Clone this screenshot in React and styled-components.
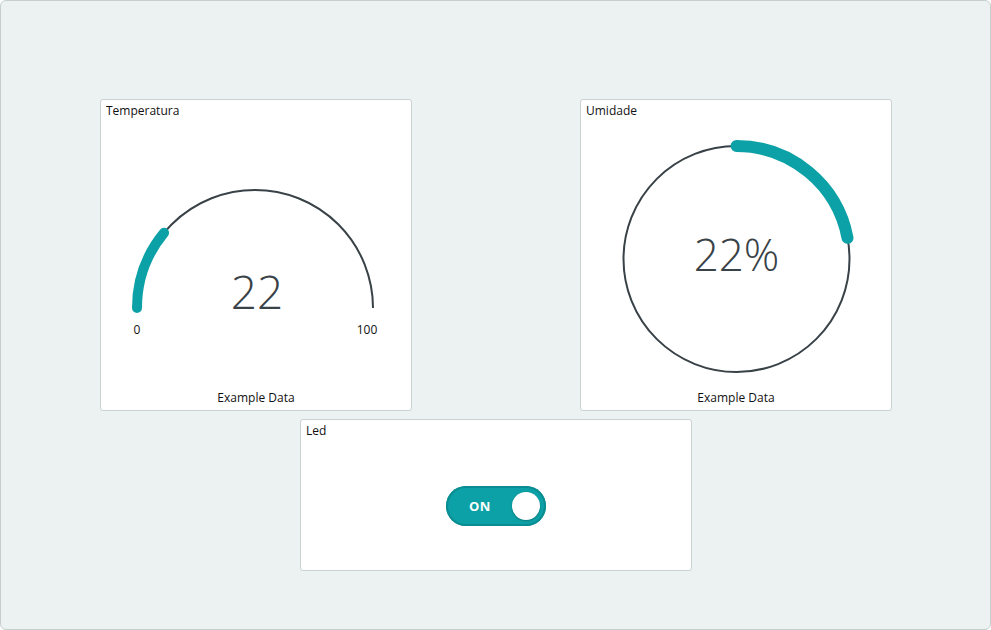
import React from "react";
import styled, { createGlobalStyle } from "styled-components";

const Global = createGlobalStyle`
  html, body { margin: 0; padding: 0; background: #ffffff; }
  body { font-family: "Open Sans", "Noto Sans", sans-serif; }
  * { box-sizing: border-box; }
`;

const Frame = styled.div`
  width: 991px;
  height: 630px;
  background: #ecf1f1;
  border: 1px solid #c6cfcf;
  border-radius: 6px;
  padding: 98px 0 0 99px;
`;

const Grid = styled.div`
  display: grid;
  grid-template-columns: repeat(20, 32px);
  grid-auto-rows: 32px;
  gap: 8px;
`;

const Card = styled.div`
  grid-column: ${(p) => p.$col} / span ${(p) => p.$w};
  grid-row: ${(p) => p.$row} / span ${(p) => p.$h};
  background: #ffffff;
  border: 1px solid #c9d1d1;
  border-radius: 3px;
  display: flex;
  flex-direction: column;
  overflow: hidden;
`;

const Title = styled.div`
  font-size: 12px;
  line-height: 16px;
  height: 18px;
  padding: 3px 0 0 5px;
  color: #111;
`;

const Body = styled.div`
  flex: 1;
  position: relative;
  display: flex;
  align-items: center;
  justify-content: center;
`;

const Footer = styled.div`
  font-size: 12px;
  line-height: 16px;
  text-align: center;
  padding-bottom: 4px;
  color: #111;
`;

const Chart = styled.svg`
  display: block;
  width: 310px;
  height: 271px;
`;

const SwitchTrack = styled.div`
  width: 100px;
  height: 40px;
  border-radius: 20px;
  background: #0ca1a6;
  box-shadow: inset 0 0 0 2px #0a8d92;
  display: flex;
  align-items: center;
  justify-content: space-between;
  padding: 0 6px 0 23px;
  margin-top: 4px;
`;

const SwitchLabel = styled.span`
  color: #ffffff;
  font-weight: 700;
  font-size: 13px;
  letter-spacing: 0.5px;
  font-family: "Open Sans", sans-serif;
`;

const Knob = styled.span`
  width: 28px;
  height: 28px;
  border-radius: 50%;
  background: #ffffff;
  box-shadow: 0 1px 2px rgba(0, 0, 0, 0.25);
`;

const DARK = "#394247";
const TEAL = "#0ca1a6";

function polar(cx, cy, r, deg) {
  const a = (deg * Math.PI) / 180;
  return [cx + r * Math.cos(a), cy + r * Math.sin(a)];
}

function Gauge({ value }) {
  const cx = 154, cy = 189, r = 118;
  const endDeg = 180 + (value / 100) * 180;
  const [ex, ey] = polar(cx, cy, r, endDeg);
  return (
    <Chart viewBox="0 0 310 271">
      <path d={`M ${cx - r} ${cy} A ${r} ${r} 0 0 1 ${cx + r} ${cy}`} fill="none" stroke={DARK} strokeWidth="2" />
      <path d={`M ${cx - r} ${cy} A ${r} ${r} 0 0 1 ${ex} ${ey}`} fill="none" stroke={TEAL} strokeWidth="10" strokeLinecap="round" />
      <text x={cx + 2} y={cy + 1} textAnchor="middle" fontSize="46" fontWeight="300" fill={DARK} fontFamily="Open Sans, sans-serif">{value}</text>
      <text x={cx - r} y={cy + 26} textAnchor="middle" fontSize="12" fill="#111" fontFamily="Open Sans, sans-serif">0</text>
      <text x={cx + r - 6} y={cy + 26} textAnchor="middle" fontSize="12" fill="#111" fontFamily="Open Sans, sans-serif">100</text>
    </Chart>
  );
}

function Ring({ value }) {
  const cx = 155.5, cy = 140, r = 113;
  const endDeg = -90 + (value / 100) * 360;
  const [ex, ey] = polar(cx, cy, r, endDeg);
  return (
    <Chart viewBox="0 0 310 271">
      <circle cx={cx} cy={cy} r={r} fill="none" stroke={DARK} strokeWidth="2" />
      <path d={`M ${cx} ${cy - r} A ${r} ${r} 0 0 1 ${ex} ${ey}`} fill="none" stroke={TEAL} strokeWidth="12" strokeLinecap="round" />
      <text x={cx} y={cy + 12} textAnchor="middle" fontSize="44" fontWeight="300" fill={DARK} fontFamily="Open Sans, sans-serif">{value}%</text>
    </Chart>
  );
}

export default function App() {
  return (
    <>
      <Global />
      <Frame>
        <Grid>
          <Card $col={1} $w={8} $row={1} $h={8}>
            <Title>Temperatura</Title>
            <Body><Gauge value={22} /></Body>
            <Footer>Example Data</Footer>
          </Card>
          <Card $col={13} $w={8} $row={1} $h={8}>
            <Title>Umidade</Title>
            <Body><Ring value={22} /></Body>
            <Footer>Example Data</Footer>
          </Card>
          <Card $col={6} $w={10} $row={9} $h={4}>
            <Title>Led</Title>
            <Body>
              <SwitchTrack>
                <SwitchLabel>ON</SwitchLabel>
                <Knob />
              </SwitchTrack>
            </Body>
          </Card>
        </Grid>
      </Frame>
    </>
  );
}
